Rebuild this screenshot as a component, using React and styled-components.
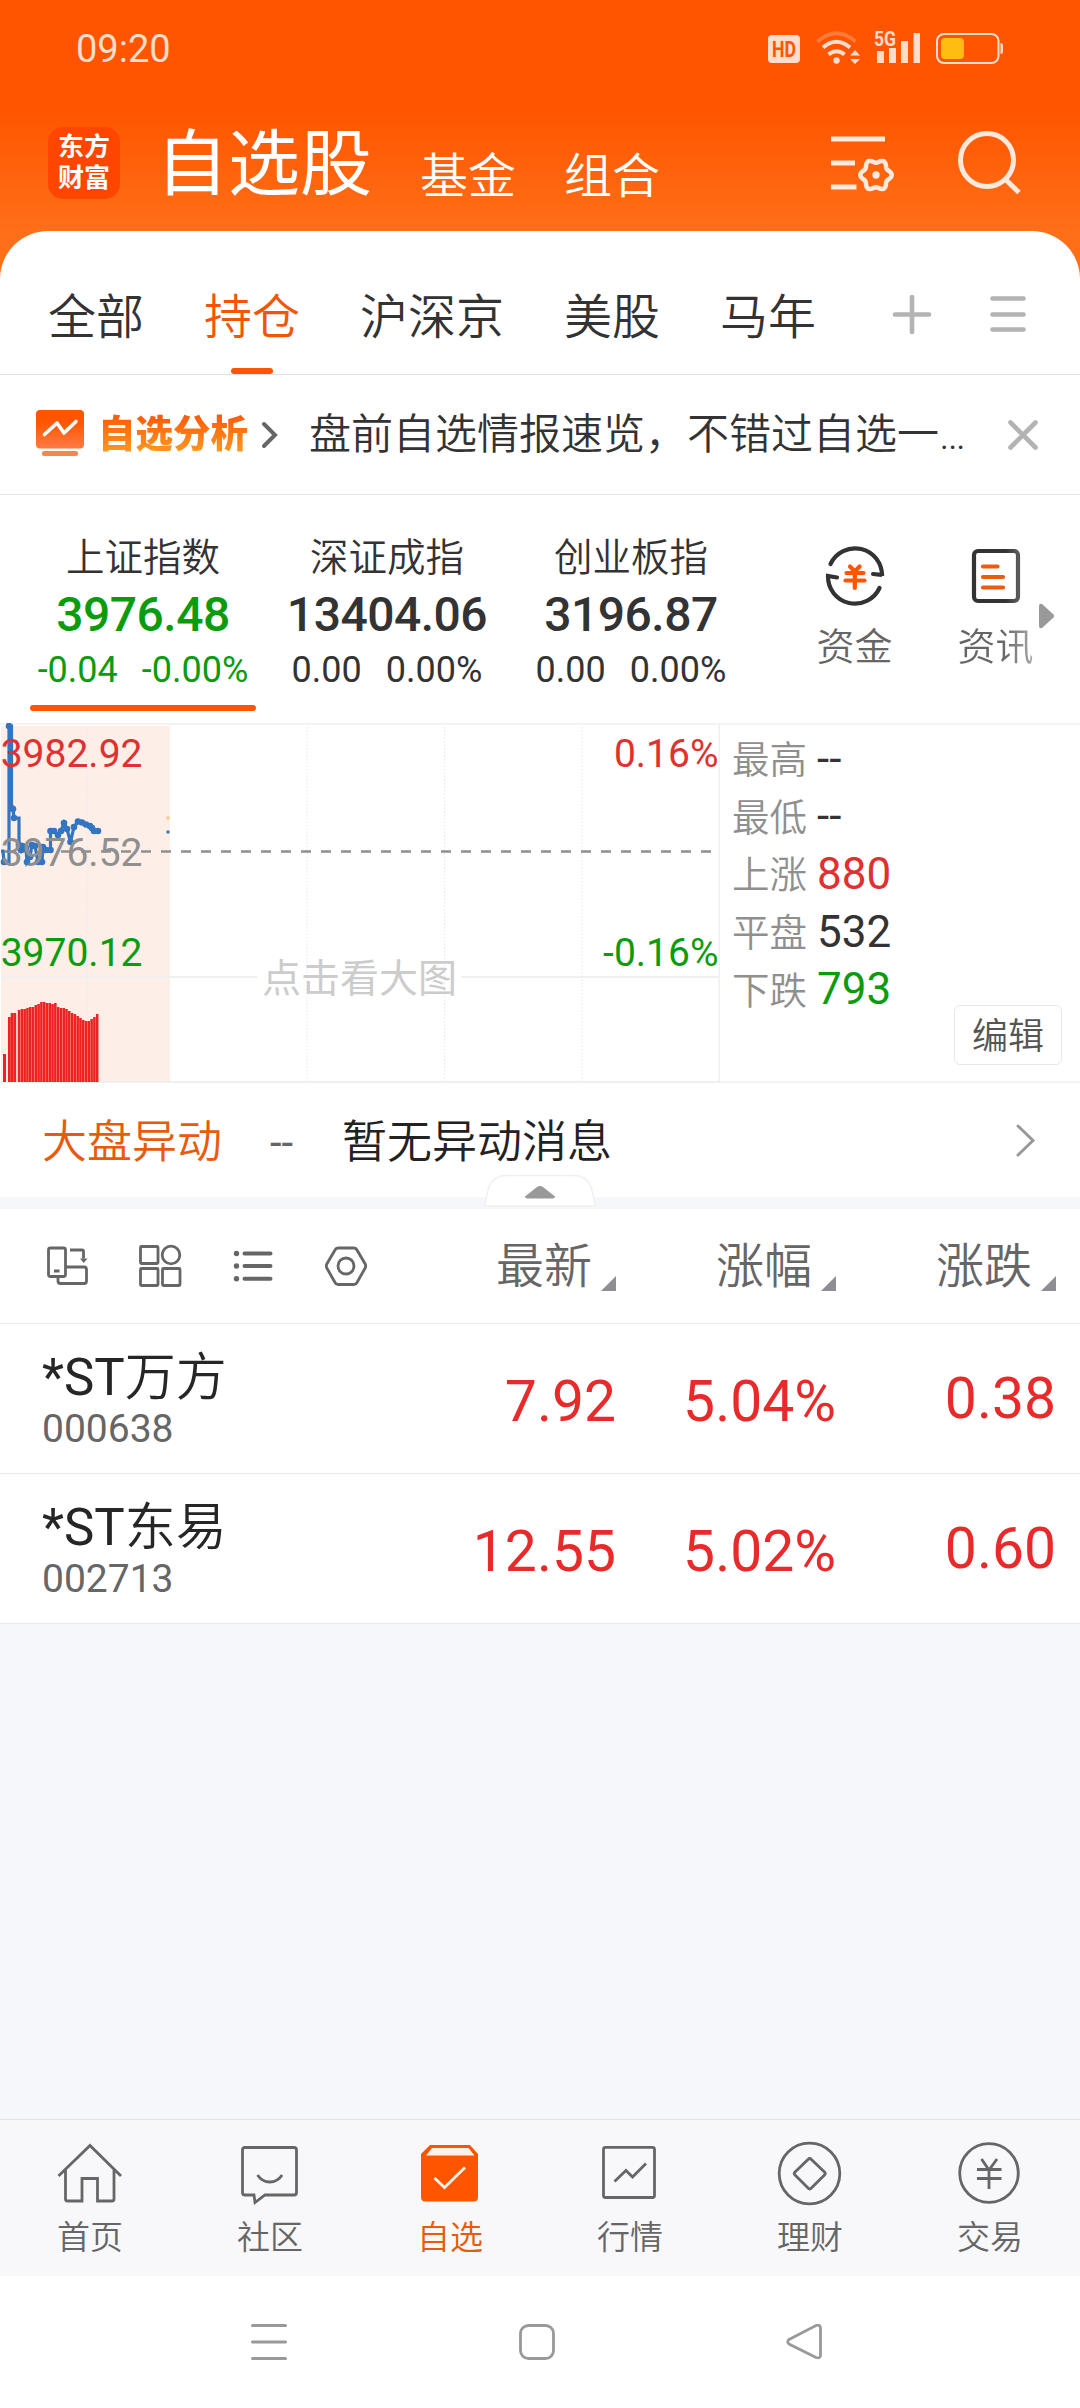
import React from "react";
import styled, { createGlobalStyle } from "styled-components";

const Global = createGlobalStyle`
  *, *::before, *::after { box-sizing: border-box; }
  body { margin: 0; background: #fff; }
  svg { display: block; flex: none; }
`;

const latin = `Roboto, "Noto Sans CJK SC", sans-serif`;
const thin = `Roboto, "Noto Sans CJK SC DemiLight", "Noto Sans CJK SC", sans-serif`;

const Page = styled.div`
  width: 1080px;
  height: 2408px;
  display: flex;
  flex-direction: column;
  overflow: hidden;
  background: #fff;
  color: #333;
  font-family: ${latin};
`;

/* ---------- header ---------- */
const Hero = styled.header`
  height: 291px;
  margin-bottom: -60px;
  flex: none;
  background: linear-gradient(#ff5500 0, #ff5500 108px, #ff6f18 231px, #ff6f18 100%);
`;
const StatusBar = styled.div`
  height: 96px;
  padding: 0 70px 0 76px;
  display: flex;
  justify-content: space-between;
`;
const Clock = styled.div`
  padding-top: 26px;
  font-size: 38px;
  line-height: 46px;
  color: #ffddcc;
`;
const TitleBar = styled.div`
  height: 135px;
  display: flex;
  padding-left: 48px;
`;
const Logo = styled.div`
  width: 72px;
  height: 72px;
  margin-top: 31px;
  border-radius: 15px;
  background: #ff4600;
  color: #fff;
  display: flex;
  flex-direction: column;
  align-items: center;
  gap: 1px;
  font-weight: 700;
  font-size: 26px;
  line-height: 30px;
  padding-top: 5px;
`;
const Titles = styled.nav`
  display: flex;
  align-items: flex-start;
  gap: 48px;
  margin-left: 36px;
  padding-top: 33px;
  width: 673px;
  color: #fff;
`;
const Title = styled.span`
  font-family: ${(p) => (p.$big ? latin : thin)};
  font-size: ${(p) => (p.$big ? 72 : 48)}px;
  line-height: 72px;
  font-weight: ${(p) => (p.$big ? 400 : 350)};
  padding-top: ${(p) => (p.$big ? 0 : 12)}px;
`;
const HeroIcons = styled.div`
  display: flex;
`;

/* ---------- group tabs ---------- */
const Tabs = styled.div`
  height: 144px;
  flex: none;
  display: flex;
  background: #fff;
  border-radius: 48px 48px 0 0;
  border-bottom: 1px solid #e2e2e2;
  padding-left: 48px;
`;
const TabList = styled.div`
  display: flex;
  gap: 60px;
  width: 843px;
`;
const Tab = styled.div`
  display: flex;
  flex-direction: column;
  align-items: center;
  justify-content: space-between;
  padding-top: 59px;
  font-family: ${thin};
  font-size: 48px;
  line-height: 56px;
  font-weight: 350;
  white-space: nowrap;
  color: ${(p) => (p.$active ? "#f25507" : "#333")};
  &::after {
    content: "";
    width: 42px;
    height: 6px;
    border-radius: 3px;
    background: ${(p) => (p.$active ? "#ff5500" : "transparent")};
  }
`;
const TabTools = styled.svg`
  margin-top: 53px;
`;

/* ---------- analysis strip ---------- */
const Strip = styled.div`
  height: 120px;
  flex: none;
  display: flex;
  align-items: center;
  padding-left: 34px;
  border-bottom: 1px solid #e6e6e6;
`;
const StripTitle = styled.div`
  margin-left: 12px;
  width: 163px;
  flex: none;
  font-size: 37.5px;
  line-height: 44px;
  font-weight: 900;
  padding-bottom: 2px;
  background: linear-gradient(#ff5c08 10%, #ff9a22 90%);
  -webkit-background-clip: text;
  background-clip: text;
  color: transparent;
`;
const StripNews = styled.div`
  margin-left: 31px;
  width: 697px;
  padding-top: 1px;
  flex: none;
  font-family: ${thin};
  font-size: 42px;
  line-height: 50px;
  font-weight: 350;
  white-space: nowrap;
`;

/* ---------- indices ---------- */
const IndexBar = styled.div`
  height: 228px;
  flex: none;
  display: flex;
  padding-left: 21px;
`;
const IndexCell = styled.div`
  width: 244px;
  padding-top: 37px;
  display: flex;
  flex-direction: column;
  align-items: center;
  color: ${(p) => (p.$down ? "#0a9c0e" : "#333")};
`;
const IndexName = styled.div`
  font-family: ${thin};
  font-size: 38.5px;
  line-height: 52px;
  font-weight: 350;
  color: #333;
`;
const IndexValue = styled.div`
  margin-top: 4px;
  font-size: 48px;
  line-height: 54px;
  font-weight: 500;
  letter-spacing: -0.5px;
`;
const IndexDelta = styled.div`
  margin-top: 7px;
  display: flex;
  gap: 24px;
  font-size: 36px;
  line-height: 42px;
`;
const IndexMark = styled.div`
  width: 226px;
  height: 6px;
  margin-top: 14px;
  border-radius: 3px;
  background: #ff5500;
`;
const Shortcuts = styled.div`
  flex: 1;
  display: flex;
  padding-left: 31px;
`;
const Shortcut = styled.div`
  width: 141px;
  padding-top: 49px;
  display: flex;
  flex-direction: column;
  align-items: center;
  font-family: ${thin};
  font-size: 38px;
  line-height: 46px;
  font-weight: 350;
  color: #666;
`;
const ShortcutLabel = styled.div`
  margin-top: 16px;
  ${(p) => p.$fade && `
    background: linear-gradient(90deg, #666 60%, #aaa 100%);
    -webkit-background-clip: text;
    background-clip: text;
    color: transparent;
  `}
`;
const MoreArrow = styled.svg`
  margin: 108px 0 0 -27px;
`;

/* ---------- minute chart ---------- */
const ChartRow = styled.div`
  height: 360px;
  flex: none;
  display: flex;
`;
const Stats = styled.div`
  flex: 1;
  display: flex;
  flex-direction: column;
  border-top: 2px solid #f4f4f4;
  border-bottom: 2px solid #f4f4f4;
  padding: 5px 18px 0 12px;
  height: 360px;
`;
const Stat = styled.div`
  display: flex;
  align-items: center;
  height: 57.6px;
  font-size: 44px;
  color: ${(p) => p.$color};
`;
const StatLabel = styled.span`
  width: 85px;
  padding-bottom: 4px;
  font-family: ${thin};
  font-size: 37.5px;
  font-weight: 350;
  color: #8f8f8f;
`;
const EditButton = styled.button`
  align-self: flex-end;
  width: 108px;
  height: 60px;
  margin-top: -13px;
  padding: 4px 0 0;
  border: 1px solid #e8e8e8;
  border-radius: 6px;
  background: #fff;
  font: 350 36px/50px ${thin};
  color: #555;
`;

/* ---------- market movement ---------- */
const Movement = styled.div`
  height: 114px;
  flex: none;
  display: flex;
  align-items: center;
  padding: 1px 44px 0 42px;
  font-family: ${thin};
  font-size: 45px;
  font-weight: 350;
  color: #222;
`;
const MovementTag = styled.span`
  width: 228px;
  padding-top: 5px;
  line-height: 54px;
  color: #e85a0c;
`;
const MovementTime = styled.span`
  width: 72px;
  padding-top: 3px;
  font-family: ${latin};
  font-size: 42px;
  font-weight: 400;
  color: #666;
`;
const MovementText = styled.span`
  flex: 1;
  padding-top: 5px;
  line-height: 54px;
`;
const Band = styled.div`
  height: 12px;
  flex: none;
  background: #f5f7fa;
  display: flex;
  justify-content: center;
  align-items: flex-end;
`;
const Handle = styled.svg`
  margin-bottom: 2px;
`;

/* ---------- holdings table ---------- */
const columns = "396px 220px 220px 220px";
const HeadRow = styled.div`
  height: 115px;
  flex: none;
  display: grid;
  grid-template-columns: ${columns};
  border-bottom: 1px solid #e9e9e9;
`;
const Tools = styled.div`
  display: flex;
  gap: 49px;
  padding: 35px 0 0 45px;
`;
const HeadCell = styled.div`
  display: flex;
  justify-content: flex-end;
  padding-top: 30px;
  gap: 9px;
  font-family: ${thin};
  font-size: 48px;
  line-height: 56px;
  font-weight: 350;
  color: #666;
`;
const SortMark = styled.span`
  width: 15px;
  height: 15px;
  margin-top: 37px;
  background: #8e8e93;
  clip-path: polygon(100% 0, 100% 100%, 0 100%);
`;
const StockRow = styled.div`
  height: 150px;
  flex: none;
  display: grid;
  grid-template-columns: ${columns};
  border-bottom: 1px solid #e9e9e9;
`;
const Stock = styled.div`
  padding: 24px 0 0 42px;
`;
const StockName = styled.div`
  font-family: ${thin};
  font-size: 51px;
  line-height: 60px;
  color: #262626;
`;
const StockCode = styled.div`
  margin-top: -1px;
  font-size: 39px;
  line-height: 44px;
  color: #666;
`;
const Figure = styled.div`
  padding-top: ${(p) => (p.$raised ? 42 : 45)}px;
  text-align: right;
  font-size: 57px;
  line-height: 66px;
  color: #e82a2a;
`;
const Blank = styled.div`
  flex: 1;
  background: #f6f7fa;
`;

/* ---------- bottom bars ---------- */
const NavBar = styled.nav`
  height: 157px;
  flex: none;
  display: grid;
  grid-template-columns: repeat(6, 180px);
  background: #f8f8fa;
  border-top: 1px solid #e2e3e6;
`;
const NavItem = styled.div`
  display: flex;
  flex-direction: column;
  align-items: center;
  padding-top: 18px;
  font-family: ${thin};
  font-size: 33px;
  line-height: 40px;
  font-weight: 350;
  color: ${(p) => (p.$active ? "#e85a0c" : "#666")};
`;
const NavLabel = styled.span`
  margin-top: 10px;
`;
const SystemBar = styled.div`
  height: 132px;
  flex: none;
  display: flex;
  align-items: center;
  padding-left: 249px;
  gap: 228px;
`;

/* ---------- drawings ---------- */
const StatusIcons = () => (
  <svg width="250" height="70" viewBox="760 0 250 70" fill="#ffddcc">
    <rect x="768" y="35" width="32" height="28" rx="4" />
    <text x="784" y="57" textAnchor="middle" fontFamily="Roboto" fontWeight="700" fontSize="22" textLength="24" lengthAdjust="spacingAndGlyphs" fill="#ff5500">HD</text>
    <g fill="none" stroke="#ffddcc" strokeWidth="4">
      <path d="M817.500 41.500Q836.500 25 855.500 41.500" stroke="#ff7b38" />
      <path d="M823 47.500Q836.500 36 850 47.500" />
      <path d="M828.500 54.500Q836.500 48 844.500 54.500" />
    </g>
    <circle cx="836.500" cy="60.500" r="3.200" />
    <path d="M855 50l5 5.500h-10zM855 64l-5-5h10z" />
    <text x="874" y="46" fontFamily="Roboto" fontWeight="700" fontSize="20" textLength="22" lengthAdjust="spacingAndGlyphs">5G</text>
    <rect x="877" y="51" width="7" height="12" />
    <rect x="889" y="48" width="7" height="15" />
    <rect x="901" y="41" width="7" height="22" />
    <rect x="913.500" y="33" width="6.500" height="30" />
    <rect x="937" y="34" width="61.500" height="29" rx="7" fill="none" stroke="#ffddcc" strokeWidth="2" />
    <path d="M1000.500 43q2.500 0 2.500 3v5q0 3-2.500 3z" />
    <rect x="941" y="38" width="23" height="21" rx="4" fill="#ffbd12" />
  </svg>
);

const GEAR = Array.from({ length: 49 }, (_, i) => {
  const t = (i / 48) * Math.PI * 2;
  const r = 14 + 1.8 * Math.cos(6 * t);
  return `${(876 + r * Math.cos(t)).toFixed(2)} ${(175 + r * Math.sin(t)).toFixed(2)}`;
}).join("L");

const HeaderIcons = () => (
  <svg width="200" height="100" viewBox="829 96 200 100" fill="none" stroke="#ffe9dd" strokeWidth="5">
    <path d="M831 139h54M831 163h24M831 187h25.500" />
    <path d={`M${GEAR}Z`} strokeWidth="4.500" strokeLinejoin="round" />
    <circle cx="876" cy="175" r="3.700" fill="#ffe9dd" stroke="none" />
    <circle cx="987" cy="160" r="26.500" />
    <path d="M1005 179L1019 192.500" />
  </svg>
);

const TabIcons = () => (
  <TabTools width="140" height="60" viewBox="891 284 140 60" fill="none" stroke="#b3b3b3" strokeWidth="4.600" strokeLinecap="round">
    <path d="M895 314.500h34M912 297v35M992.500 298.500h31M992.500 314.500h31M992.500 329.500h31" />
  </TabTools>
);

const MonitorIcon = () => (
  <svg width="52" height="54" viewBox="34 407 52 54">
    <defs>
      <linearGradient id="mon" x1="0" x2="0" y1="0" y2="1">
        <stop offset="0.3" stopColor="#ff5500" />
        <stop offset="1" stopColor="#ff7a45" />
      </linearGradient>
    </defs>
    <rect x="36" y="409" width="48" height="38.500" rx="4" fill="url(#mon)" />
    <rect x="42" y="450" width="36" height="5" rx="2" fill="#f88450" />
    <path d="M44.500 433.500l12.500-11.500 7 10 12-11.500" fill="none" stroke="#fff" strokeWidth="3.600" strokeLinecap="round" strokeLinejoin="round" />
  </svg>
);

const Arrow = ({ w, h, color, stroke }) => (
  <svg width={w + 6} height={h + 6} viewBox={`-3 -3 ${w + 6} ${h + 6}`} fill="none" stroke={color} strokeWidth={stroke} strokeLinecap="round">
    <path d={`M0 0L${w} ${h / 2}L0 ${h}`} />
  </svg>
);

const CloseIcon = () => (
  <svg width="34" height="34" viewBox="-17 -17 34 34" stroke="#b3b3b3" strokeWidth="4.600" strokeLinecap="round">
    <path d="M-12.500 -12.500L12.500 12.500M12.500 -12.500L-12.500 12.500" />
  </svg>
);

const FundIcon = () => (
  <svg width="64" height="64" viewBox="824 544 64 64" fill="none" strokeWidth="4.200" strokeLinecap="round">
    <path d="M831.500 564A27 27 0 0 1 883 576V575L874 574M880.500 588A27 27 0 0 1 829 576V576L838 577.500" stroke="#333" />
    <path d="M851 566.500l4.800 5 4.800-5M847.500 573h17M846.500 580.500h19M855.800 572v16" stroke="#ff5500" />
  </svg>
);
const NewsIcon = () => (
  <svg width="64" height="64" viewBox="965 544 64 64" fill="none" strokeLinecap="round">
    <defs>
      <linearGradient id="doc" x1="0" x2="1">
        <stop offset="0.7" stopColor="#333" />
        <stop offset="1" stopColor="#5a5a5a" />
      </linearGradient>
    </defs>
    <rect x="975" y="551" width="44" height="50" rx="4" stroke="url(#doc)" strokeWidth="4.200" />
    <path d="M984 566.500h14.500M984 577h20M984 587.500h20" stroke="#ee5a10" strokeWidth="4.200" />
  </svg>
);

const PRICE = [
  [1, 851], [3, 851], [4, 862], [9, 862], [9, 726], [11.5, 726], [11.5, 808], [13, 809], [14, 818], [19, 818],
  [19, 845], [21, 850], [22.5, 846], [26, 848], [27, 862], [30, 857], [32, 845], [35, 846], [38, 862], [42, 862],
  [43, 847], [46, 850], [50.5, 850], [50.5, 831], [54, 831], [58, 835], [61, 831], [64, 823], [67, 829],
  [70.5, 842], [74, 827], [78, 821.5], [82, 822.5], [86, 824.5], [90, 826], [92, 828], [94, 831], [98, 831],
];
const DOTS = PRICE.filter(([x, y], i) => i > 1 && !(x === 9 && y > 800) && !(x === 11.5 && y < 800) && !(x === 19 && y < 820));
const OPENING = [1017, 1013, 1013];
const VOLUME = [
  1010, 1009, 1009, 1008, 1007, 1007, 1005, 1004, 1002, 1002, 1003, 1003, 1004, 1003, 1007,
  1008, 1008, 1009, 1011, 1013, 1014, 1016, 1018, 1020, 1021, 1021, 1019, 1017, 1014,
];

const MinuteChart = () => (
  <svg width="720" height="360" viewBox="0 723 720 360" fontFamily="Roboto, 'Noto Sans CJK SC', sans-serif" fontSize="39">
    <rect x="1" y="726" width="169" height="356" fill="#fdeee8" />
    <g stroke="#f0f0f0" strokeWidth="2">
      <path d="M0 724H720" stroke="#f3f3f3" />
      <path d="M0 1082H720M719.500 724V1083" />
      <path d="M1 977H257M461 977H720" />
    </g>
    <path d="M87 727V1081M307 727V1081M444.500 727V1081M582 727V1081" stroke="#e9e9e9" strokeWidth="1.200" strokeDasharray="1.500 2" />
    <g fill="#ee2222">
      <rect x="3" y="1054" width="3" height="28" />
      {OPENING.map((y, i) => <rect key={i} x={8 + i * 2.7} y={y} width="2.750" height={1082 - y} />)}
      {VOLUME.map((y, i) => <rect key={i} x={17.8 + i * 2.79} y={y} width="2.550" height={1082 - y} />)}
    </g>
    <path d="M1 851.500H712" stroke="#8f8f8f" strokeWidth="2.600" strokeDasharray="10 10" />
    <g fill="#3375c0">
      <polyline points={PRICE.map((p) => p.join(",")).join(" ")} fill="none" stroke="#3375c0" strokeWidth="3.200" />
      {DOTS.map(([x, y], i) => <circle key={i} cx={x} cy={y} r="3.300" />)}
      <rect x="166.500" y="830.500" width="3" height="3" />
    </g>
    <rect x="166.500" y="816.500" width="3" height="3" fill="#f8c77c" />
    <g fill="#e03030">
      <text x="0.700" y="767">3982.92</text>
      <text x="718.500" y="767" textAnchor="end">0.16%</text>
    </g>
    <text x="0.700" y="866" fill="#8f8f8f">3976.52</text>
    <g fill="#0a9c0e">
      <text x="0.700" y="966">3970.12</text>
      <text x="718.500" y="966" textAnchor="end">-0.16%</text>
    </g>
    <text x="262" y="991.500" fontSize="39" fontWeight="400" fill="#ccc">点击看大图</text>
  </svg>
);

const TOOL_ICONS = [
  <>
    <rect x="48.500" y="1248" width="17" height="28.500" rx="2" />
    <path d="M65 1267h19q2.500 0 2.500 2.500v11.500q0 2.500-2.500 2.500h-23.500q-2.500 0-2.500-2.500v-4M54 1271h5.500M70 1250h12q1.500 0 1.500 1.500v7" />
    <path d="M80 1258.500h7.500l-3.800 4.500z" fill="#666" stroke="none" />
  </>,
  <>
    <rect x="140.500" y="1246.500" width="17.500" height="17" rx="1" />
    <circle cx="171" cy="1255" r="8.800" />
    <rect x="140.500" y="1268.500" width="17.500" height="17" rx="1" />
    <rect x="162.500" y="1268.500" width="17.500" height="17" rx="1" />
  </>,
  <>
    <path d="M244.500 1253.500h26M244.500 1266h26M244.500 1278.800h26" strokeWidth="4" strokeLinecap="round" />
    <g fill="#666" stroke="none">
      <circle cx="236.500" cy="1253.500" r="2.700" />
      <circle cx="236.500" cy="1266" r="2.700" />
      <circle cx="236.500" cy="1278.800" r="2.700" />
    </g>
  </>,
  <>
    <path d="M338 1248h16q2 0 3 2l8.200 14q1 2 0 4l-8.200 14.500q-1 2-3 2h-16q-2 0-3-2l-8.200-14.500q-1-2 0-4l8.200-14q1-2 3-2z" />
    <circle cx="346" cy="1266" r="8" />
  </>,
];
const TOOL_X = [45, 138, 231, 324];

const NAV = [
  ["首页", <path key="a" d="M58.500 2176L90 2145.500L121 2176M65.500 2170V2199q0 2 2 2H82V2178.500H97.500V2201H112q2 0 2-2V2170" />],
  ["社区", <path key="b" d="M245 2147.500H294q2.500 0 2.500 2.500V2192.500q0 2.500-2.500 2.500H265L255 2202.500L254 2195H245q-2.500 0-2.500-2.500V2150q0-2.500 2.500-2.500zM257.500 2175q4.500 7 12.300 7t12.300-7" />],
  ["自选", <g key="c" stroke="none">
    <path d="M421 2154L430 2145H470L478 2154V2197q0 4.500-4.500 4.500H425.500q-4.500 0-4.500-4.500z" fill="#ff5500" />
    <path d="M426 2155.500L432 2148H468.500L474.500 2155.500z" fill="#fbf1ec" />
    <path d="M434.500 2178L444.500 2187.500L465 2167.500" fill="none" stroke="#fff0e8" strokeWidth="2.800" />
  </g>],
  ["行情", <path key="d" d="M605.500 2147.300H652.500q2 0 2 2V2195.500q0 2-2 2H605.500q-2 0-2-2V2149.300q0-2 2-2zM614.500 2181.500L626 2170.500L632.500 2177L646 2163.500" />],
  ["理财", <g key="e"><circle cx="809.500" cy="2173.500" r="30.300" /><path d="M808 2159.500q1.700-2 3.400 0L824.500 2172q1.500 1.500 0 3L811.400 2188q-1.700 2-3.400 0L795 2175q-1.500-1.500 0-3z" /></g>],
  ["交易", <g key="f"><circle cx="989" cy="2173" r="29.300" /><path d="M981.500 2159L989 2170L997 2159M977 2169.500h24.500M977 2178.500h24.500M989 2170V2189" /></g>],
];

const INDICES = [
  ["上证指数", "3976.48", "-0.04", "-0.00%", true],
  ["深证成指", "13404.06", "0.00", "0.00%", false],
  ["创业板指", "3196.87", "0.00", "0.00%", false],
];
const STATS = [
  ["最高", "--", "#333"],
  ["最低", "--", "#333"],
  ["上涨", "880", "#e03030"],
  ["平盘", "532", "#333"],
  ["下跌", "793", "#0a9c0e"],
];
const STOCKS = [
  ["*ST万方", "000638", "7.92", "5.04%", "0.38"],
  ["*ST东易", "002713", "12.55", "5.02%", "0.60"],
];

export default function App() {
  return (
    <Page>
      <Global />
      <Hero>
        <StatusBar>
          <Clock>09:20</Clock>
          <StatusIcons />
        </StatusBar>
        <TitleBar>
          <Logo><span>东方</span><span>财富</span></Logo>
          <Titles>
            <Title $big>自选股</Title>
            <Title>基金</Title>
            <Title>组合</Title>
          </Titles>
          <HeroIcons><HeaderIcons /></HeroIcons>
        </TitleBar>
      </Hero>

      <Tabs>
        <TabList>
          {["全部", "持仓", "沪深京", "美股", "马年"].map((t) => (
            <Tab key={t} $active={t === "持仓"}>{t}</Tab>
          ))}
        </TabList>
        <TabIcons />
      </Tabs>

      <Strip>
        <MonitorIcon />
        <StripTitle>自选分析</StripTitle>
        <Arrow w={11} h={22} color="#666" stroke={4} />
        <StripNews>盘前自选情报速览，不错过自选一…</StripNews>
        <CloseIcon />
      </Strip>

      <IndexBar>
        {INDICES.map(([name, value, diff, pct, down]) => (
          <IndexCell key={name} $down={down}>
            <IndexName>{name}</IndexName>
            <IndexValue>{value}</IndexValue>
            <IndexDelta><span>{diff}</span><span>{pct}</span></IndexDelta>
            {down && <IndexMark />}
          </IndexCell>
        ))}
        <Shortcuts>
          <Shortcut><FundIcon /><ShortcutLabel>资金</ShortcutLabel></Shortcut>
          <Shortcut><NewsIcon /><ShortcutLabel $fade>资讯</ShortcutLabel></Shortcut>
          <MoreArrow width="16" height="26" viewBox="0 0 16 26">
            <path d="M0 3q0-3 3-2l11.500 10.500q1.500 1.500 0 3L3 25q-3 1-3-2z" fill="#999" />
          </MoreArrow>
        </Shortcuts>
      </IndexBar>

      <ChartRow>
        <MinuteChart />
        <Stats>
          {STATS.map(([label, value, color]) => (
            <Stat key={label} $color={color}><StatLabel>{label}</StatLabel>{value}</Stat>
          ))}
          <EditButton>编辑</EditButton>
        </Stats>
      </ChartRow>

      <Movement>
        <MovementTag>大盘异动</MovementTag>
        <MovementTime>--</MovementTime>
        <MovementText>暂无异动消息</MovementText>
        <Arrow w={15} h={29} color="#999" stroke={3} />
      </Movement>
      <Band>
        <Handle width="114" height="33" viewBox="483 1174 114 33">
          <path d="M484.500 1206L488 1190Q492 1175.500 506 1175.500H574Q588 1175.500 592 1190L595.500 1206z" fill="#fff" stroke="#eff0f2" strokeWidth="1.500" />
          <path d="M525 1196.500L537 1187q3-2 6 0l12 9.500q0 2-2 2h-26q-2 0-2-2z" fill="#999" />
        </Handle>
      </Band>

      <HeadRow>
        <Tools>
          {TOOL_ICONS.map((icon, i) => (
            <svg key={i} width="44" height="44" viewBox={`${TOOL_X[i]} 1244 44 44`} fill="none" stroke="#666" strokeWidth="2.800">{icon}</svg>
          ))}
        </Tools>
        {["最新", "涨幅", "涨跌"].map((h) => (
          <HeadCell key={h}>{h}<SortMark /></HeadCell>
        ))}
      </HeadRow>
      {STOCKS.map(([name, code, price, pct, diff]) => (
        <StockRow key={code}>
          <Stock>
            <StockName>{name}</StockName>
            <StockCode>{code}</StockCode>
          </Stock>
          <Figure>{price}</Figure>
          <Figure>{pct}</Figure>
          <Figure $raised>{diff}</Figure>
        </StockRow>
      ))}
      <Blank />

      <NavBar>
        {NAV.map(([label, icon], i) => (
          <NavItem key={label} $active={i === 2}>
            <svg width="70" height="70" viewBox={`${55 + i * 180} 2138 70 70`} fill="none" stroke="#666" strokeWidth="2.800">{icon}</svg>
            <NavLabel>{label}</NavLabel>
          </NavItem>
        ))}
      </NavBar>
      <SystemBar>
        <svg width="40" height="40" viewBox="249 2322 40 40" stroke="#999" strokeWidth="3" strokeLinecap="round">
          <path d="M252.500 2325.500h33M252.500 2342h33M252.500 2358.500h33" />
        </svg>
        <svg width="40" height="40" viewBox="517 2322 40 40" fill="none" stroke="#999" strokeWidth="2.800">
          <rect x="520.500" y="2325.500" width="33" height="33" rx="8" />
        </svg>
        <svg width="40" height="40" viewBox="783 2322 40 40" fill="none" stroke="#999" strokeWidth="2.800">
          <path d="M787 2339.500L814 2325.500Q818.500 2324 818.500 2328.500V2355Q818.500 2359 814 2357.500L787 2344Q784.500 2341.800 787 2339.500z" />
        </svg>
      </SystemBar>
    </Page>
  );
}
